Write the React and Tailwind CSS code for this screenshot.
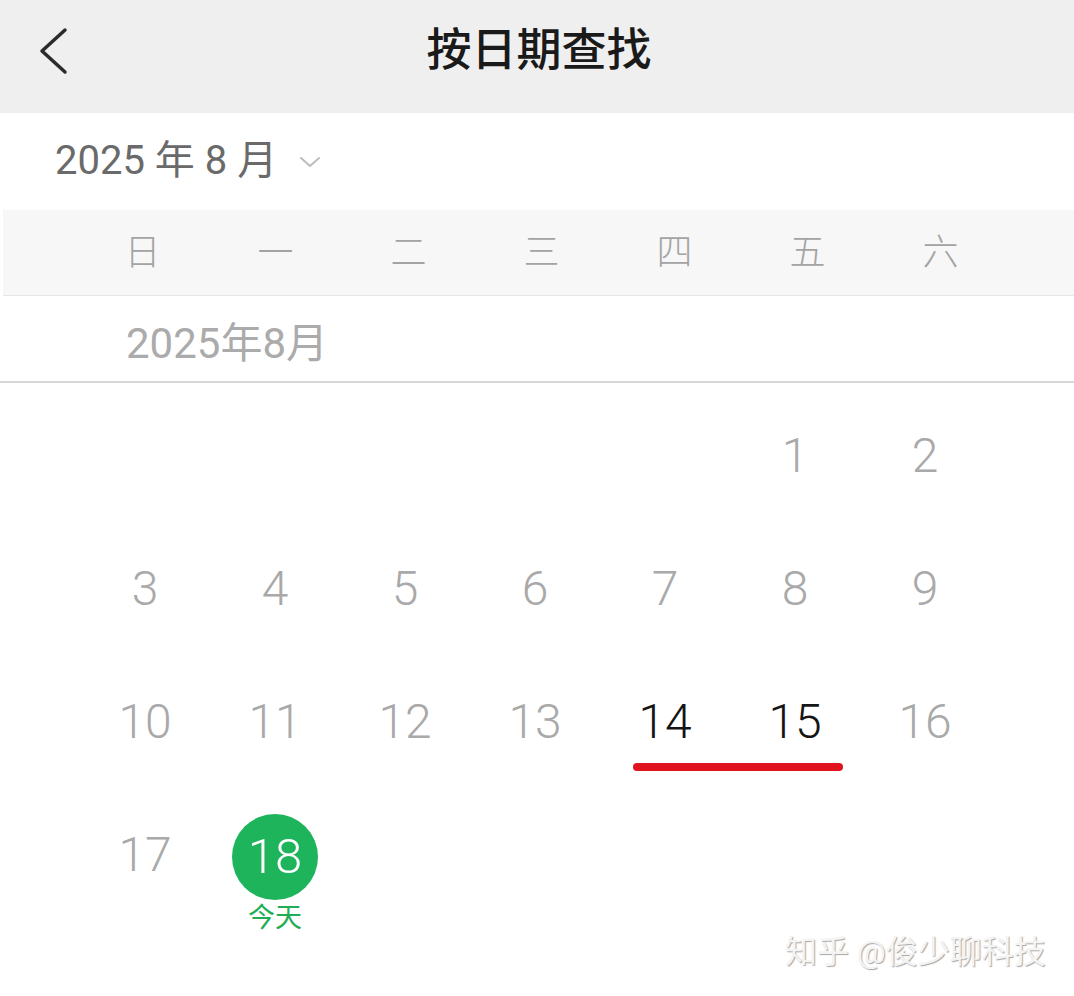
import React from 'react';

const weekdays = ['日', '一', '二', '三', '四', '五', '六'];

// Aug 1, 2025 is a Friday -> 5 empty cells first
const cells = [...Array(5).fill(null), ...Array.from({ length: 18 }, (_, i) => i + 1)];

const DayCell = ({ day }) => {
  if (!day) return <div className="h-[133px]" />;

  if (day === 18) {
    return (
      <div className="relative h-[133px] flex items-center justify-center">
        <div className="w-[86px] h-[86px] mt-[4px] rounded-full bg-[#1eb45c] flex items-center justify-center text-white text-[49px] font-light leading-none">
          18
        </div>
        <span className="absolute left-0 right-0 top-[117px] text-center text-[27px] leading-none text-[#1fae57]">
          今天
        </span>
      </div>
    );
  }

  const picked = day === 14 || day === 15;
  return (
    <div className="relative h-[133px] flex items-center justify-center">
      <span className={`text-[48px] font-light leading-none ${picked ? 'text-[#151515]' : 'text-[#a9a9a9]'}`}>
        {day}
      </span>
      {day === 14 && (
        <div className="absolute left-[33px] top-[108px] w-[210px] h-[8px] rounded-full bg-[#e0141f]" />
      )}
    </div>
  );
};

const App = () => {
  return (
    <div
      className="relative h-[996px] bg-white overflow-hidden"
      style={{ fontFamily: 'Roboto, "Noto Sans CJK SC", sans-serif' }}
    >
      {/* top bar */}
      <div className="grid grid-cols-[1fr_auto_1fr] items-center h-[113px] bg-[#efefef] pb-[12px]">
        <div className="pl-[38px] flex items-center">
          <svg width="32" height="48" viewBox="0 0 32 48" fill="none">
            <path d="M27 3 L4 24 L27 45" stroke="#2b2b2b" strokeWidth="3.5" strokeLinecap="round" strokeLinejoin="round" />
          </svg>
        </div>
        <h1 className="text-[45px] font-medium text-[#1a1a1a] leading-none pl-[4px]">按日期查找</h1>
        <div />
      </div>

      {/* month picker */}
      <div className="h-[97px] flex items-center pl-[55px] pb-[2px]">
        <span className="text-[40px] text-[#6a6a6a] leading-none">2025 年 8 月</span>
        <svg className="ml-[22px] mt-[2px]" width="22" height="12" viewBox="0 0 22 12" fill="none">
          <path d="M2 2 L11 10 L20 2" stroke="#bdbdbd" strokeWidth="2" strokeLinecap="round" strokeLinejoin="round" />
        </svg>
      </div>

      {/* weekday header */}
      <div className="ml-[3px] h-[86px] bg-[#f7f7f7] border-b border-[#e6e6e6] grid grid-cols-7 pl-[73px] pr-[67px] items-center">
        {weekdays.map((w) => (
          <div key={w} className="text-center text-[36px] font-light text-[#a3a3a3] leading-none">
            {w}
          </div>
        ))}
      </div>

      {/* month label */}
      <div className="h-[87px] flex items-center pl-[126px] pt-[10px] border-b-2 border-[#d6d6d6]">
        <span className="text-[42px] text-[#ababab] leading-none">2025年8月</span>
      </div>

      {/* days */}
      <div className="grid grid-cols-7 pl-[80px] pr-[84px] pt-[6px]">
        {cells.map((d, i) => (
          <DayCell key={i} day={d} />
        ))}
      </div>

      {/* watermark */}
      <div className="absolute left-[785px] top-[936px] text-[32px] leading-none text-[#f4f4f4] [text-shadow:1px_1px_1px_rgba(0,0,0,0.35)]">
        知乎 @俊少聊科技
      </div>
    </div>
  );
};

export default App;
